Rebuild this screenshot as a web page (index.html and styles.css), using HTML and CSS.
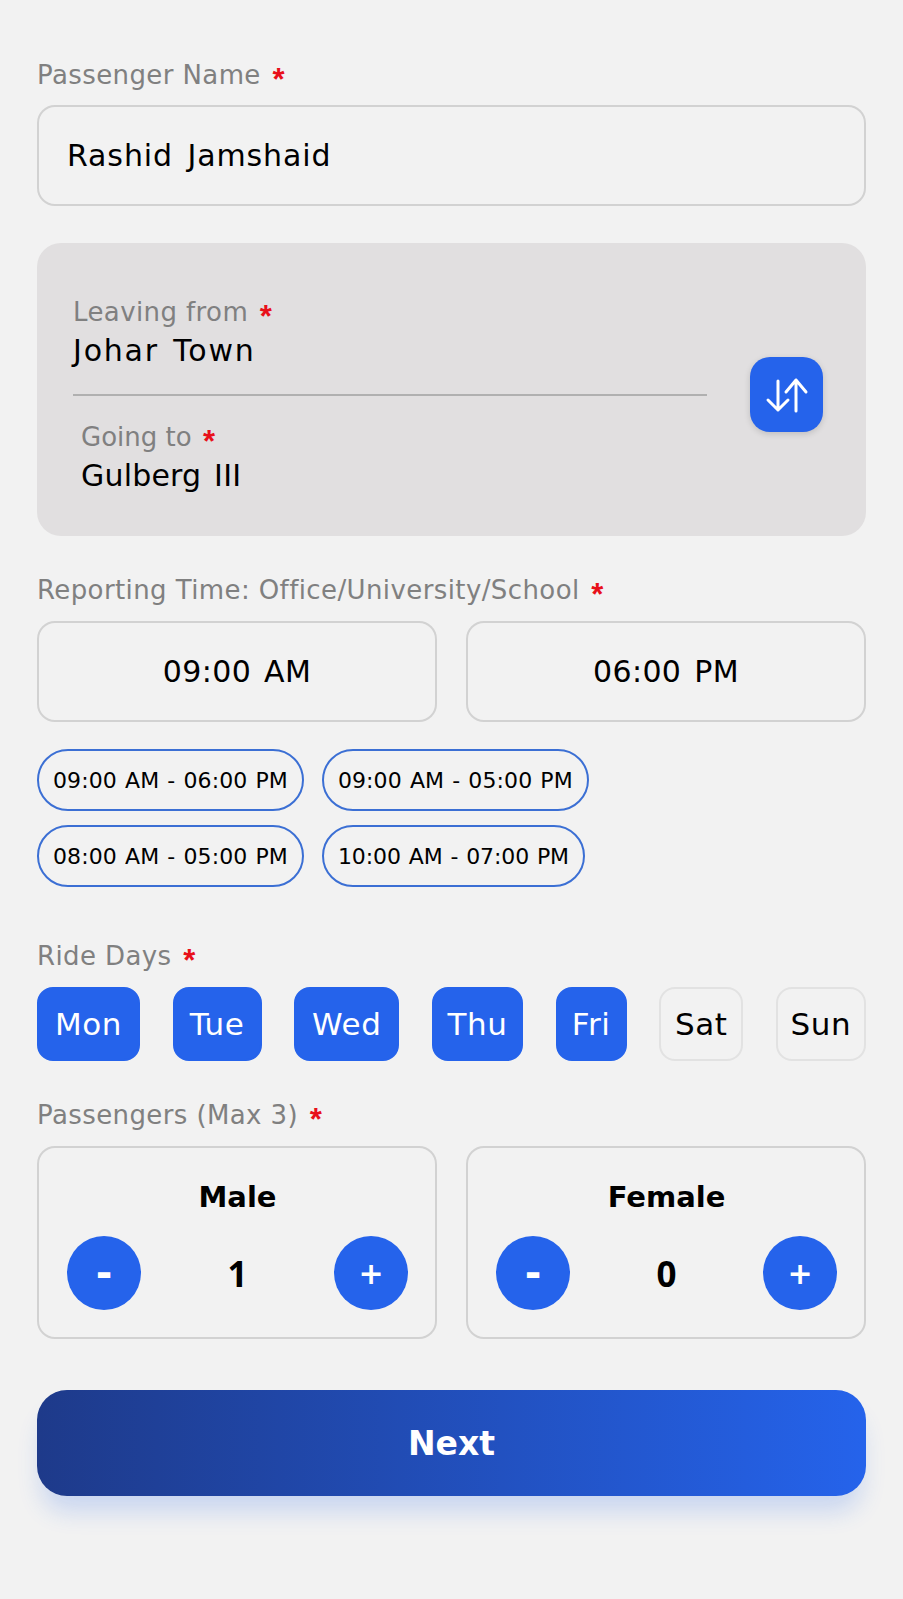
FILE: index.html
```html
<!DOCTYPE html>
<html lang="en">
<head>
    <meta charset="UTF-8">
    <meta name="viewport" content="width=device-width, initial-scale=1.0">
    <title>Ride Details</title>
    <link rel="stylesheet" href="styles.css">
</head>
<body>

<form class="formulario">
    <label class="rotulo" for="nome">Passenger Name <span class="obrigatorio">*</span></label>
    <input class="campo" type="text" id="nome" value="Rashid Jamshaid">

    <!-- Origem e destino -->
    <div class="rota">
        <div class="rota-campos">
            <div class="rotulo">Leaving from <span class="obrigatorio">*</span></div>
            <div class="rota-valor">Johar Town</div>
            <div class="divisor"></div>
            <div class="rota-destino">
                <div class="rotulo">Going to <span class="obrigatorio">*</span></div>
                <div class="rota-valor">Gulberg III</div>
            </div>
        </div>
        <button type="button" class="trocar" aria-label="Swap">
            <svg viewBox="0 0 73 75" width="73" height="75" fill="none" stroke="#ffffff" stroke-width="3" stroke-linecap="round" stroke-linejoin="round">
                <path d="M28 24V53M18 43L28 53L38 43"/>
                <path d="M46 54V23M36 35L46 23L56 35"/>
            </svg>
        </button>
    </div>

    <div class="rotulo secao">Reporting Time: Office/University/School <span class="obrigatorio">*</span></div>
    <div class="duas-colunas">
        <button type="button" class="horario">09:00 AM</button>
        <button type="button" class="horario">06:00 PM</button>
    </div>

    <div class="atalhos">
        <div class="atalhos-linha">
            <button type="button" class="atalho">09:00 AM - 06:00 PM</button>
            <button type="button" class="atalho">09:00 AM - 05:00 PM</button>
        </div>
        <div class="atalhos-linha">
            <button type="button" class="atalho">08:00 AM - 05:00 PM</button>
            <button type="button" class="atalho atalho-estreito">10:00 AM - 07:00 PM</button>
        </div>
    </div>

    <div class="rotulo secao-dias">Ride Days <span class="obrigatorio">*</span></div>
    <div class="dias">
        <button type="button" class="dia ativo">Mon</button>
        <button type="button" class="dia ativo">Tue</button>
        <button type="button" class="dia ativo">Wed</button>
        <button type="button" class="dia ativo">Thu</button>
        <button type="button" class="dia ativo">Fri</button>
        <button type="button" class="dia">Sat</button>
        <button type="button" class="dia">Sun</button>
    </div>

    <div class="rotulo secao">Passengers (Max 3) <span class="obrigatorio">*</span></div>
    <div class="duas-colunas">
        <div class="contador">
            <div class="contador-titulo">Male</div>
            <div class="contador-linha">
                <button type="button" class="redondo menos">-</button>
                <span class="contador-valor">1</span>
                <button type="button" class="redondo">+</button>
            </div>
        </div>
        <div class="contador">
            <div class="contador-titulo">Female</div>
            <div class="contador-linha">
                <button type="button" class="redondo menos">-</button>
                <span class="contador-valor">0</span>
                <button type="button" class="redondo">+</button>
            </div>
        </div>
    </div>

    <button type="button" class="proximo">Next</button>
</form>

</body>
</html>
```

FILE: styles.css
```css
* {
    box-sizing: border-box;
}

body {
    background-color: #f2f2f2;
    color: #000000;
    font-family: "DejaVu Sans", sans-serif;
    margin: 0;
}

button,
input {
    font-family: inherit;
    color: inherit;
}

.formulario {
    display: flex;
    flex-direction: column;
    padding: 60px 37px 104px;
}

.rotulo {
    display: block;
    height: 30px;
    color: #808080;
    font-size: 26px;
    line-height: 30px;
    letter-spacing: 0.4px;
    margin-bottom: 15px;
}

.obrigatorio {
    color: #e8101a;
    font-family: "Liberation Sans", sans-serif;
    font-size: 31px;
    font-weight: bold;
    line-height: 1;
    margin-left: 3px;
    vertical-align: -6px;
}

.campo {
    height: 101px;
    border: 2px solid #d2d2d2;
    border-radius: 18px;
    background-color: transparent;
    padding: 0 28px;
    font-size: 30px;
    letter-spacing: 0.9px;
    word-spacing: 4px;
    outline: none;
}

.rota {
    display: flex;
    align-items: center;
    margin-top: 37px;
    padding: 54px 43px 40px 36px;
    border-radius: 24px;
    background-color: #e1dfe0;
}

.rota-campos {
    flex: 1;
    margin-right: 43px;
}

.rota .rotulo {
    margin-bottom: 4px;
}

.rota-valor {
    font-size: 30px;
    line-height: 40px;
    letter-spacing: 1.8px;
    word-spacing: 3px;
}

.divisor {
    height: 2px;
    margin: 23px 0 26px;
    background-color: #b0b0b0;
}

.rota-destino {
    padding-left: 8px;
}

.rota-destino .rotulo {
    letter-spacing: 0;
}

.rota-destino .rota-valor {
    letter-spacing: 0.2px;
}

.trocar {
    width: 73px;
    height: 75px;
    margin-bottom: 5px;
    padding: 0;
    border: none;
    border-radius: 20px;
    background-color: #2563eb;
    box-shadow: 0 2px 6px rgba(0, 0, 0, 0.15);
}

.trocar svg {
    display: block;
}

.secao {
    margin-top: 39px;
    margin-bottom: 16px;
}

.secao-dias {
    margin-top: 54px;
    margin-bottom: 16px;
}

.duas-colunas {
    display: grid;
    grid-template-columns: 1fr 1fr;
    gap: 29px;
}

.horario {
    height: 101px;
    border: 2px solid #d2d2d2;
    border-radius: 18px;
    background-color: transparent;
    font-size: 30px;
    letter-spacing: 0.4px;
    word-spacing: 3px;
}

.atalhos {
    display: flex;
    flex-direction: column;
    gap: 14px;
    margin-top: 27px;
}

.atalhos-linha {
    display: flex;
    gap: 18px;
}

.atalho {
    height: 62px;
    padding: 0 14px;
    border: 2px solid #3b6fd4;
    border-radius: 31px;
    background-color: transparent;
    font-size: 22px;
    letter-spacing: 0.1px;
    word-spacing: 1px;
    white-space: nowrap;
}

.atalho-estreito {
    letter-spacing: -0.1px;
}

.dias {
    display: flex;
    justify-content: space-between;
}

.dia {
    height: 74px;
    padding: 0;
    border: 2px solid #e2e2e2;
    border-radius: 16px;
    background-color: transparent;
    font-size: 31px;
    letter-spacing: 0.6px;
}

.dia.ativo {
    border-color: #2563eb;
    background-color: #2563eb;
    color: #ffffff;
}

/* larguras de cada dia */
.dia:nth-child(1) { width: 103px; }
.dia:nth-child(2) { width: 89px; }
.dia:nth-child(3) { width: 105px; }
.dia:nth-child(4) { width: 91px; }
.dia:nth-child(5) { width: 71px; }
.dia:nth-child(6) { width: 84px; }
.dia:nth-child(7) { width: 90px; }

.contador {
    height: 193px;
    padding: 33px 27px 0 28px;
    border: 2px solid #d2d2d2;
    border-radius: 18px;
}

.contador-titulo {
    font-size: 29px;
    font-weight: bold;
    line-height: 32px;
    text-align: center;
}

.contador-linha {
    display: flex;
    align-items: center;
    justify-content: space-between;
    margin-top: 23px;
}

.redondo {
    width: 74px;
    height: 74px;
    padding: 0;
    border: none;
    border-radius: 50%;
    background-color: #2563eb;
    color: #ffffff;
    font-size: 30px;
    font-weight: bold;
}

.redondo.menos {
    font-size: 40px;
}

.contador-valor {
    font-family: "Noto Sans", sans-serif;
    font-size: 35px;
    font-weight: bold;
}

.proximo {
    height: 106px;
    margin-top: 51px;
    border: none;
    border-radius: 30px;
    background: linear-gradient(90deg, #1e3a8a, #2563eb);
    box-shadow: 0 20px 25px -5px rgba(37, 99, 235, 0.2);
    color: #ffffff;
    font-size: 33px;
    font-weight: bold;
}
```
